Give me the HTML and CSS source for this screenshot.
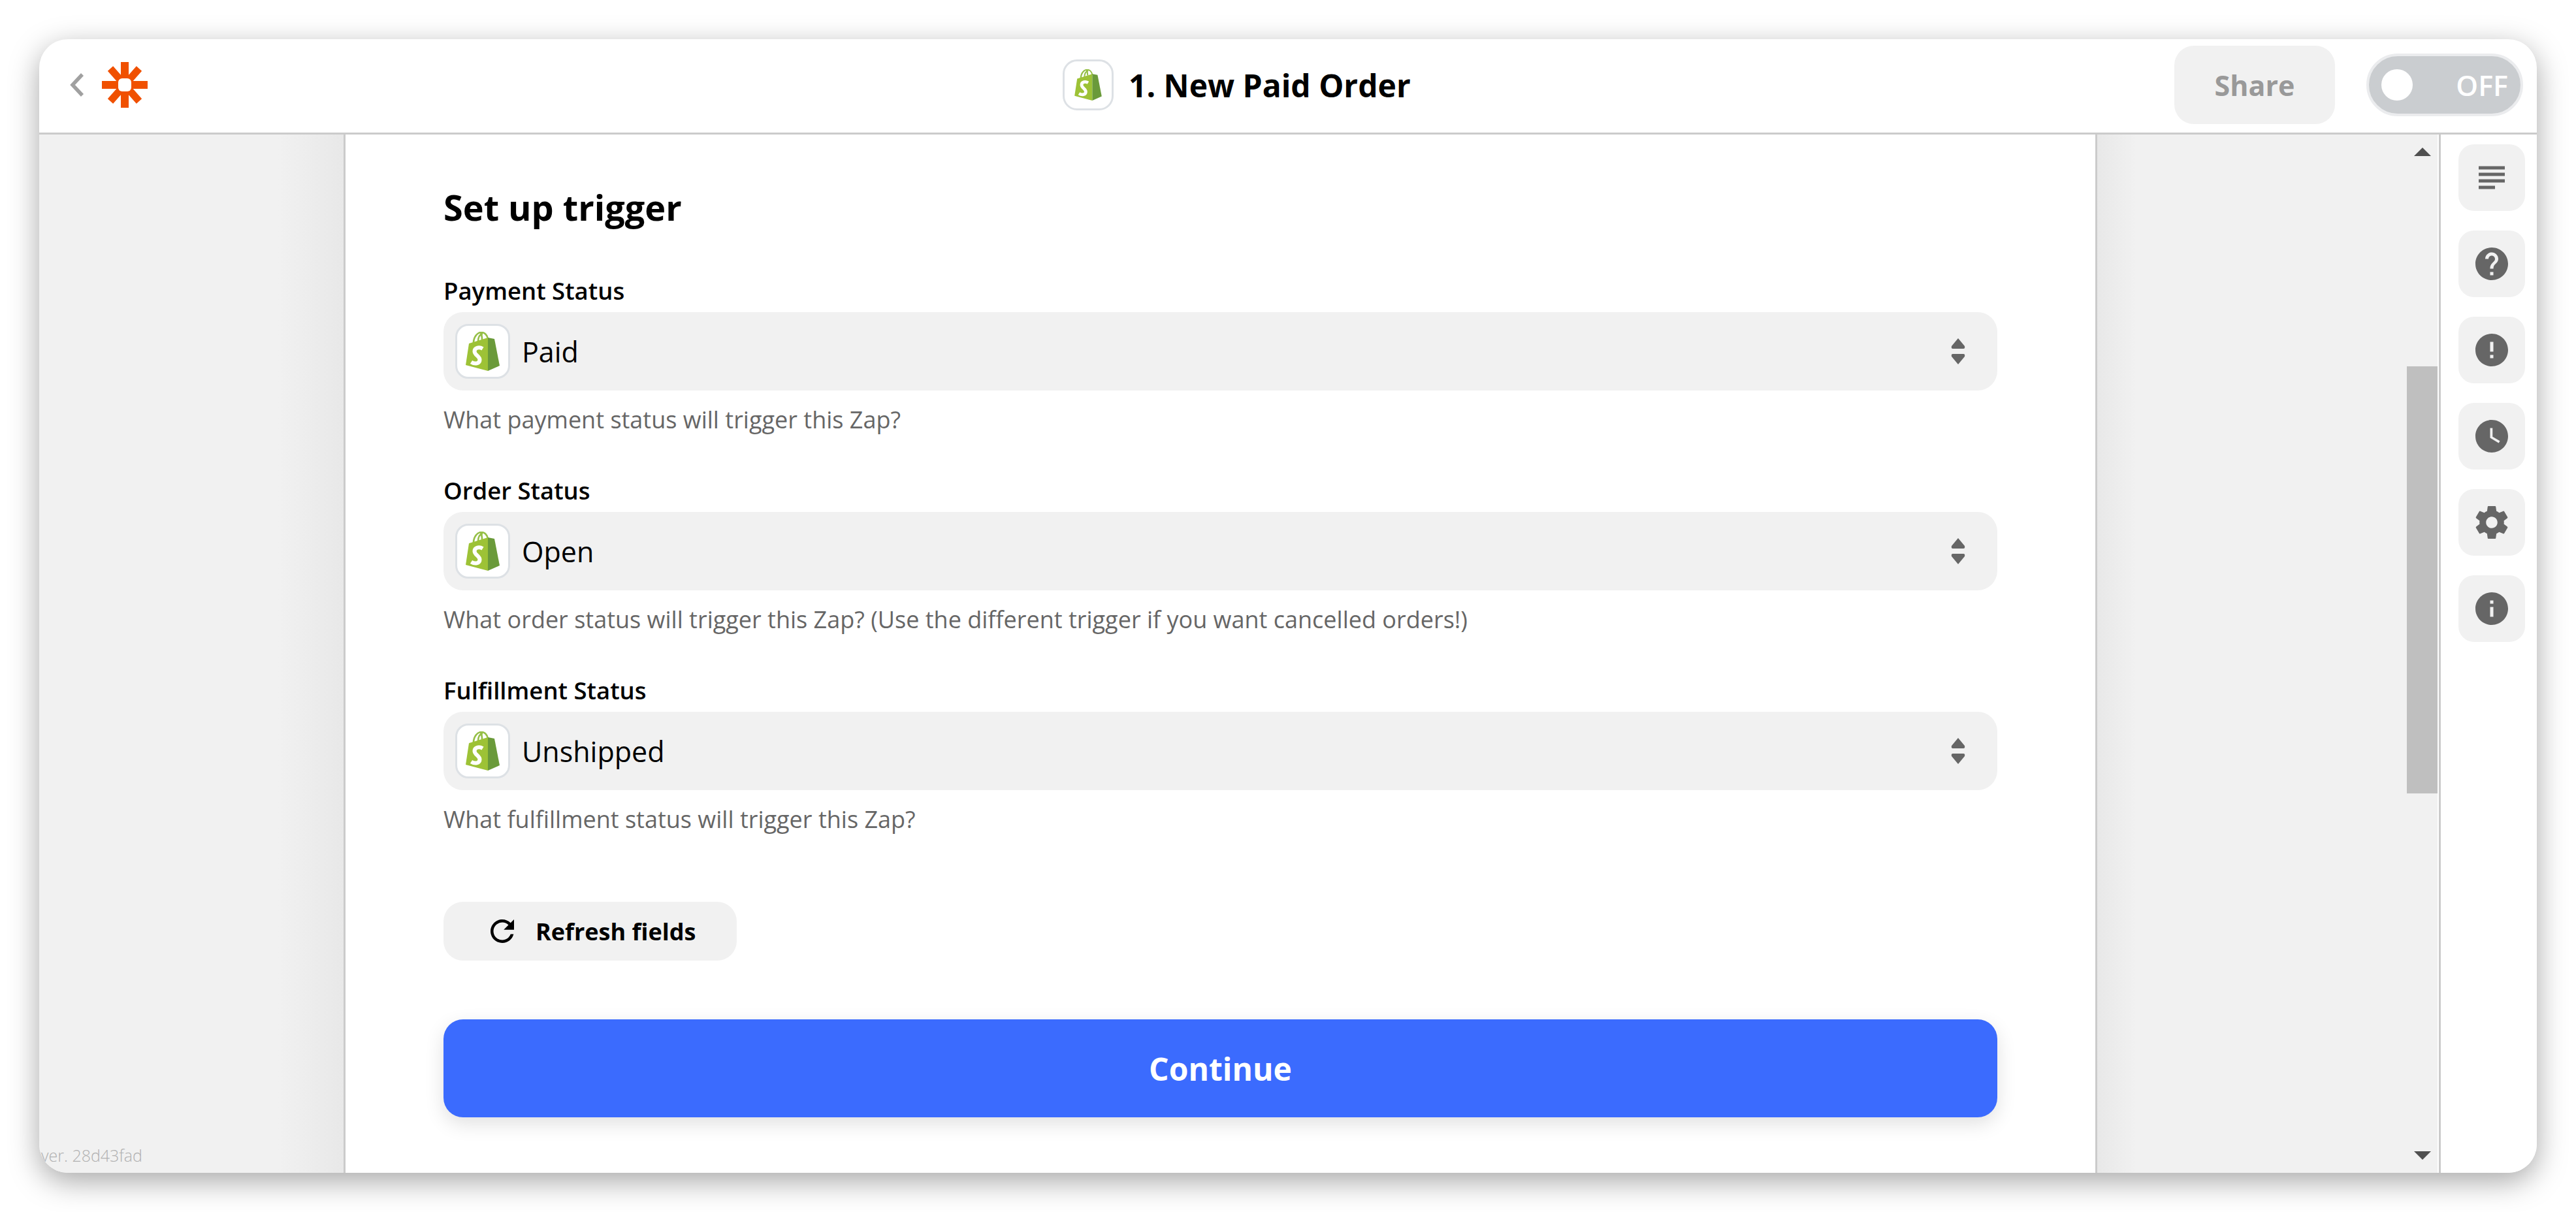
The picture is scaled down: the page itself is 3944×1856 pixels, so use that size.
FILE: index.html
```html
<!DOCTYPE html>
<html lang="en">
<head>
<meta charset="utf-8">
<title>1. New Paid Order</title>
<link rel="stylesheet" href="styles.css">
</head>
<body>
<svg class="defs" aria-hidden="true">
  <symbol id="bag" viewBox="0 0 52 60">
    <path d="M12 17C12 8 18 1 24 1c5 0 9 4 10 10M19 15c0-7 3-11 7-12M25 12c0-4 0-7-2-10" fill="none" stroke="#95bf47" stroke-width="2.6"/>
    <path d="M0 51 5 18 34 9V60Z" fill="#9dc236"/>
    <path d="M34 9 44 11 52 52 34 60Z" fill="#6a9a3a"/>
    <path d="M26 26C21 23 13.500 24 13.500 30C13.500 36 21.500 37 21.500 43C21.500 49 14 50 8.500 46.500" fill="none" stroke="#fff" stroke-width="6"/>
  </symbol>
</svg>
<div class="window">
  <header class="topbar">
    <div class="brand">
      <svg class="back" viewBox="0 0 22 36"><path d="M19 2 4 18 19 34" fill="none" stroke="#a0a0a0" stroke-width="5.500"/></svg>
      <svg class="logo" viewBox="0 0 70 70">
        <path d="M35 0V70M0 35H70" class="logo-arms"/>
        <path d="M13 10 57 60M57 10 13 60" class="logo-arms logo-diag"/>
        <rect x="25" y="25" width="20" height="20" rx="6" fill="#fff"/>
      </svg>
    </div>
    <div class="title">
      <span class="app-tile app-tile-sm"><svg class="bag-sm"><use href="#bag"/></svg></span>
      <h1 class="title-text">1. New Paid Order</h1>
    </div>
    <div class="actions">
      <button class="share">Share</button>
      <div class="toggle"><span class="knob"></span><span class="toggle-label">OFF</span></div>
    </div>
  </header>
  <div class="workspace">
    <div class="gutter gutter-left"><span class="version">ver. 28d43fad</span></div>
    <main class="panel">
      <h2 class="heading">Set up trigger</h2>
      <section class="field">
        <label class="field-label">Payment Status</label>
        <div class="select">
          <span class="app-tile"><svg class="bag-md"><use href="#bag"/></svg></span>
          <span class="select-value">Paid</span>
          <svg class="updown" viewBox="0 0 24 44"><path d="M12 2 22 14Q23 18 20 18H4Q1 18 2 14ZM12 42 22 30Q23 26 20 26H4Q1 26 2 30Z" fill="#666"/></svg>
        </div>
        <p class="hint">What payment status will trigger this Zap?</p>
      </section>
      <section class="field">
        <label class="field-label">Order Status</label>
        <div class="select">
          <span class="app-tile"><svg class="bag-md"><use href="#bag"/></svg></span>
          <span class="select-value">Open</span>
          <svg class="updown" viewBox="0 0 24 44"><path d="M12 2 22 14Q23 18 20 18H4Q1 18 2 14ZM12 42 22 30Q23 26 20 26H4Q1 26 2 30Z" fill="#666"/></svg>
        </div>
        <p class="hint">What order status will trigger this Zap? (Use the different trigger if you want cancelled orders!)</p>
      </section>
      <section class="field">
        <label class="field-label">Fulfillment Status</label>
        <div class="select">
          <span class="app-tile"><svg class="bag-md"><use href="#bag"/></svg></span>
          <span class="select-value">Unshipped</span>
          <svg class="updown" viewBox="0 0 24 44"><path d="M12 2 22 14Q23 18 20 18H4Q1 18 2 14ZM12 42 22 30Q23 26 20 26H4Q1 26 2 30Z" fill="#666"/></svg>
        </div>
        <p class="hint">What fulfillment status will trigger this Zap?</p>
      </section>
      <button class="refresh">
        <svg class="refresh-icon" viewBox="4 4 16 16"><path d="M17.650 6.350C16.200 4.900 14.210 4 12 4c-4.420 0-7.990 3.580-7.990 8s3.570 8 7.990 8c3.730 0 6.840-2.550 7.730-6h-2.080c-.82 2.330-3.040 4-5.650 4-3.310 0-6-2.690-6-6s2.690-6 6-6c1.660 0 3.140.69 4.220 1.780L13 11h7V4l-2.350 2.350z"/></svg>
        Refresh fields
      </button>
      <button class="continue">Continue</button>
    </main>
    <div class="gutter gutter-right"></div>
    <div class="scrollbar">
      <span class="arrow-up"></span>
      <span class="thumb"></span>
      <span class="arrow-down"></span>
    </div>
    <aside class="rail">
      <button class="rail-btn"><svg viewBox="0 0 24 24"><path d="M14 17H4v2h10v-2zm6-8H4v2h16V9zM4 15h16v-2H4v2zM4 5v2h16V5H4z"/></svg></button>
      <button class="rail-btn"><svg viewBox="0 0 24 24"><path d="M12 2C6.480 2 2 6.480 2 12s4.480 10 10 10 10-4.480 10-10S17.520 2 12 2zm1 17h-2v-2h2v2zm2.070-7.750l-.9.92C13.450 12.900 13 13.500 13 15h-2v-.5c0-1.100.45-2.100 1.170-2.830l1.240-1.260c.37-.36.59-.86.59-1.410 0-1.100-.9-2-2-2s-2 .9-2 2H8c0-2.210 1.790-4 4-4s4 1.790 4 4c0 .88-.36 1.680-.93 2.250z"/></svg></button>
      <button class="rail-btn"><svg viewBox="0 0 24 24"><path d="M12 2C6.480 2 2 6.480 2 12s4.480 10 10 10 10-4.480 10-10S17.520 2 12 2zm1 15h-2v-2h2v2zm0-4h-2V7h2v6z"/></svg></button>
      <button class="rail-btn"><svg viewBox="0 0 24 24"><path fill-rule="evenodd" d="M11.990 2C6.470 2 2 6.480 2 12s4.470 10 9.990 10C17.520 22 22 17.520 22 12S17.520 2 11.990 2zm.51 5H11v6l5.250 3.150.75-1.230-4.500-2.670z"/></svg></button>
      <button class="rail-btn"><svg viewBox="0 0 24 24"><path d="M19.430 12.980c.04-.32.07-.64.07-.98s-.03-.66-.07-.98l2.110-1.650c.19-.15.24-.42.12-.64l-2-3.460c-.12-.22-.39-.3-.61-.22l-2.490 1c-.52-.4-1.080-.73-1.690-.98l-.38-2.650C14.460 2.180 14.250 2 14 2h-4c-.25 0-.46.18-.49.42l-.38 2.650c-.61.25-1.170.59-1.690.98l-2.490-1c-.23-.09-.49 0-.61.22l-2 3.460c-.13.22-.07.49.12.64l2.110 1.650c-.04.32-.07.65-.07.98s.03.66.07.98l-2.110 1.650c-.19.15-.24.42-.12.64l2 3.460c.12.22.39.3.61.22l2.490-1c.52.4 1.080.73 1.690.98l.38 2.650c.03.24.24.42.49.42h4c.25 0 .46-.18.49-.42l.38-2.650c.61-.25 1.170-.59 1.690-.98l2.490 1c.23.09.49 0 .61-.22l2-3.460c.12-.22.07-.49-.12-.64l-2.110-1.650zM12 15.500c-1.930 0-3.500-1.570-3.500-3.500s1.570-3.500 3.500-3.500 3.500 1.570 3.500 3.500-1.570 3.500-3.500 3.500z"/></svg></button>
      <button class="rail-btn"><svg viewBox="0 0 24 24"><path d="M12 2C6.480 2 2 6.480 2 12s4.480 10 10 10 10-4.480 10-10S17.520 2 12 2zm1 15h-2v-6h2v6zm0-8h-2V7h2v2z"/></svg></button>
    </aside>
  </div>
</div>
</body>
</html>
```
FILE: styles.css
```css
* { box-sizing: border-box; }
html, body { height: 100%; }
body {
  margin: 0;
  padding: 60px;
  background: #fff;
  font-family: "Open Sans", "Liberation Sans", sans-serif;
  color: #000;
  overflow: hidden;
}
button { font-family: inherit; border: 0; padding: 0; }
h1, h2, p { margin: 0; }
.defs { width: 0; height: 0; position: absolute; }

.window {
  width: 3824px;
  height: 1736px;
  background: #fff;
  border-radius: 44px;
  box-shadow: 0 13px 46px rgba(0, 0, 0, .35);
  overflow: hidden;
  display: flex;
  flex-direction: column;
}

.topbar {
  height: 146px;
  flex: none;
  border-bottom: 3px solid #cbcbcb;
  display: flex;
  align-items: center;
}
.brand { display: flex; align-items: center; margin-left: 47px; margin-top: -3px; }
.back { width: 22px; height: 36px; }
.logo { width: 70px; height: 70px; margin-left: 27px; }
.logo-arms { fill: none; stroke: #f05000; stroke-width: 12; }
.logo-diag { stroke-width: 11; }

.title { display: flex; align-items: center; margin-left: 1401px; margin-top: -3px; }
.app-tile {
  flex: none;
  width: 84px;
  height: 84px;
  background: #fff;
  border: 3px solid #dde1e5;
  border-radius: 20px;
  display: flex;
  align-items: center;
  justify-content: center;
}
.app-tile-sm { width: 78px; height: 78px; border-radius: 22px; }
.bag-sm { width: 42px; height: 48px; }
.bag-md { width: 52px; height: 60px; }
.title-text { font-size: 48px; font-weight: 700; line-height: 60px; margin: 2px 0 0 23px; }

.actions { margin-left: auto; display: flex; align-items: center; margin-right: 21px; margin-top: -3px; }
.share {
  width: 246px;
  height: 120px;
  border-radius: 30px;
  background: #f1f1f1;
  color: #999;
  font-size: 43px;
  font-weight: 700;
}
.toggle {
  width: 240px;
  height: 96px;
  margin-left: 48px;
  border-radius: 48px;
  background: #cacdd0;
  border: 4px solid #ebecee;
  display: flex;
  align-items: center;
  justify-content: space-between;
  padding: 0 19px 0 19px;
}
.knob { width: 48px; height: 48px; border-radius: 50%; background: #fff; }
.toggle-label { color: #fff; font-size: 43px; font-weight: 600; }

.workspace { flex: 1; display: flex; min-height: 0; }
.gutter { display: flex; align-items: flex-end; }
.gutter-left {
  width: 466px;
  flex: none;
  background: linear-gradient(to right, #f1f1f1 calc(100% - 100px), #e8e8e8);
}
.gutter-right {
  flex: 1;
  background: linear-gradient(to right, #e8e8e8, #f1f1f1 60px);
}
.version { font-size: 25px; font-weight: 300; line-height: 34px; color: #b0b0b0; margin: 0 0 10px 3px; white-space: nowrap; }

.panel {
  width: 2685px;
  flex: none;
  background: #fff;
  border-left: 3px solid #cbcbcb;
  border-right: 3px solid #cbcbcb;
  padding: 81px 150px 0;
}
.heading { font-size: 54px; font-weight: 700; line-height: 60px; margin-bottom: 74px; }
.field { margin-bottom: 61px; }
.field-label { display: block; font-size: 36.500px; font-weight: 550; line-height: 46px; margin-bottom: 11px; padding-top: 1px; height: 46px; }
.select {
  height: 120px;
  border-radius: 30px;
  background: #f1f1f1;
  display: flex;
  align-items: center;
  padding: 0 48px 0 18px;
}
.select-value { font-size: 43px; font-weight: 500; margin-left: 18px; }
.updown { width: 24px; height: 44px; margin-left: auto; }
.hint { font-size: 36px; line-height: 46px; color: #666; margin-top: 22px; }

.refresh {
  display: flex;
  align-items: center;
  width: 449px;
  height: 90px;
  margin-top: 103px;
  border-radius: 30px;
  background: #f1f1f1;
  color: #000;
  font-size: 36px;
  font-weight: 700;
  padding-left: 72px;
}
.refresh-icon { width: 36px; height: 36px; margin-right: 33px; }
.continue {
  display: block;
  width: 100%;
  height: 150px;
  margin-top: 90px;
  border-radius: 30px;
  background: #3b6bfe;
  color: #fff;
  font-size: 48px;
  font-weight: 700;
  box-shadow: 0 10px 30px rgba(0, 0, 0, .12);
}

.scrollbar {
  width: 49px;
  flex: none;
  background: linear-gradient(to right, #f1f1f1 47px, #fff 47px);
  display: flex;
  flex-direction: column;
  align-items: center;
  padding-right: 2px;
}
.arrow-up, .arrow-down { width: 0; height: 0; border-left: 13px solid transparent; border-right: 13px solid transparent; flex: none; }
.arrow-up { border-bottom: 13px solid #505050; margin-top: 20px; }
.arrow-down { border-top: 13px solid #505050; margin-top: auto; margin-bottom: 20px; }
.thumb { width: 47px; height: 654px; background: #bfbfbf; margin-top: 322px; flex: none; }

.rail {
  width: 150px;
  flex: none;
  background: #fff;
  border-left: 3px solid #cbcbcb;
  padding: 15px 0 0 27px;
  display: flex;
  flex-direction: column;
  gap: 30px;
}
.rail-btn {
  width: 102px;
  height: 102px;
  border-radius: 24px;
  background: #f1f1f1;
  display: flex;
  align-items: center;
  justify-content: center;
}
.rail-btn svg { width: 60px; height: 60px; fill: #666; }
```
